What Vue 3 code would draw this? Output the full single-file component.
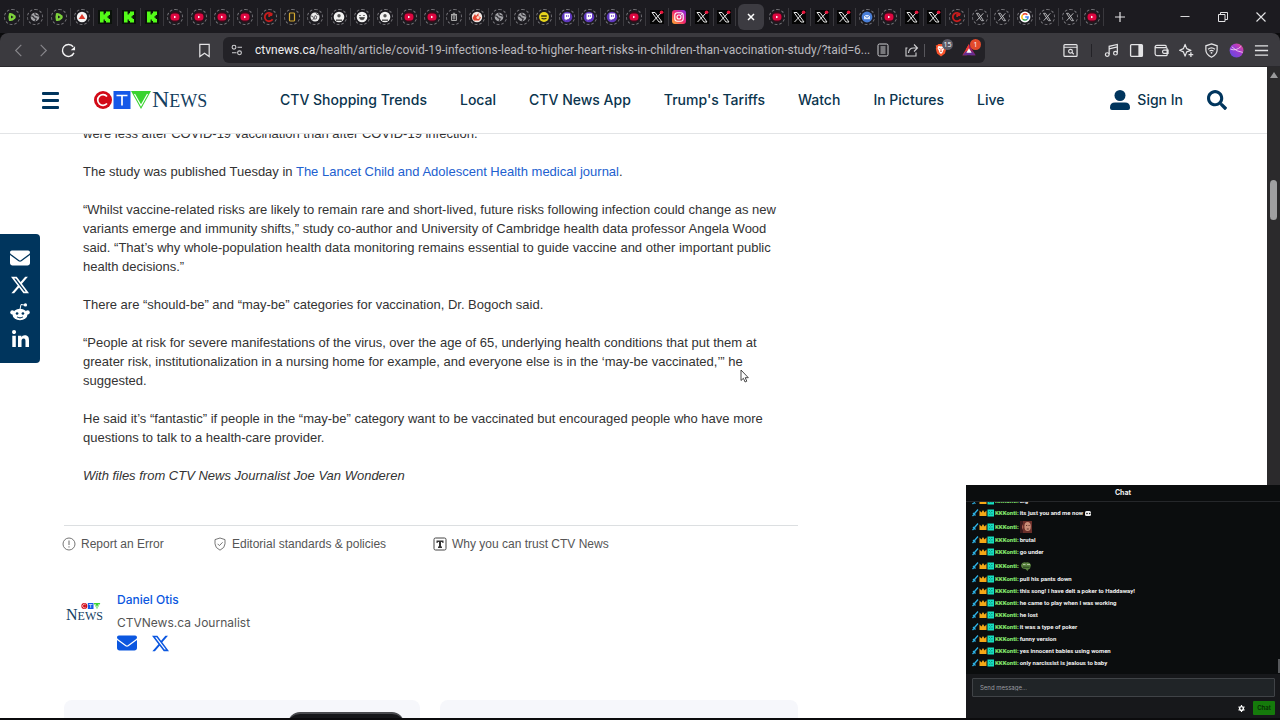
<script setup>
const tabsLeft = ['rumble', 'globe', 'rumble', 'peak', 'kick', 'kick', 'kick', 'play', 'play', 'play', 'play', 'redc', 'frame', 'ball', 'bust', 'face', 'bust', 'play']
const tabsMid = ['play', 'trash', 'hand', 'globe', 'globe', 'smile', 'twitch', 'twitch', 'twitch', 'play', 'xdark', 'insta', 'xdark', 'xdark']
const tabsRight = ['play', 'xdark', 'xdark', 'xdark', 'mailblue', 'play', 'xdark', 'xdark', 'redc', 'xring', 'xring', 'google', 'xring', 'xring', 'play']
const square = ['kick', 'xdark', 'insta']
const groups = [
  { name: 'first', tabs: tabsLeft },
  { name: 'middle', tabs: tabsMid },
  { name: 'active', tabs: [] },
  { name: 'last', tabs: tabsRight }
]

const navLinks = ['CTV Shopping Trends', 'Local', 'CTV News App', "Trump's Tariffs", 'Watch', 'In Pictures', 'Live']

const tools = [
  { id: 'music', label: 'Music' },
  { id: 'sidebar', label: 'Sidebar' },
  { id: 'wallet', label: 'Wallet' },
  { id: 'spark', label: 'Assistant' },
  { id: 'vpn', label: 'VPN' },
  { id: 'profile', label: 'Profile' },
  { id: 'menu', label: 'Menu' }
]

const shares = [
  { id: 'envelope', label: 'Email' },
  { id: 'x', label: 'X' },
  { id: 'reddit', label: 'Reddit' },
  { id: 'linkedin', label: 'LinkedIn' }
]

const messages = [
  { text: 'big' },
  { text: 'its just you and me now', eyes: true },
  { emote: 'emoteface' },
  { text: 'brutal' },
  { text: 'go under' },
  { emote: 'emotefrog' },
  { text: 'pull his pants down' },
  { text: 'this song! I have delt a poker to Haddaway!' },
  { text: 'he came to play when I was working' },
  { text: 'he lost' },
  { text: 'it was a type of poker' },
  { text: 'funny version' },
  { text: 'yes innocent babies using women' },
  { text: 'only narcissist is jealous to baby' }
]
</script>

<template>
  <div class="browser">
    <svg class="defs" aria-hidden="true">
      <defs>
        <linearGradient id="gInsta" x1="0" y1="1" x2="1" y2="0">
          <stop offset="0" stop-color="#ffb52e" /><stop offset=".5" stop-color="#f0246a" /><stop offset="1" stop-color="#7a2bf0" />
        </linearGradient>
        <linearGradient id="gProfile" x1="0" y1="1" x2="1" y2="0">
          <stop offset="0" stop-color="#5a4be0" /><stop offset=".55" stop-color="#a03bd0" /><stop offset="1" stop-color="#f04a8a" />
        </linearGradient>
        <symbol id="rumble" viewBox="0 0 14 14"><path d="M4 3.2Q7 2 10.200 5.400Q11.600 7 10.200 8.600Q7 12 4 10.800Q2.800 7 4 3.200Z" fill="#7ed33c" /><path d="M6 5.500v3l2.600-1.500z" fill="#1d1c21" /></symbol>
        <symbol id="globe" viewBox="0 0 14 14"><circle cx="7" cy="7" r="4.300" fill="#a4a4a8" /><path d="M3 6q2-.3 2.500 1t2 1.200-.5 2.600M7 3q-.5 2 1 2.300t2.800 1" fill="none" stroke="#29282d" stroke-width="1.100" /></symbol>
        <symbol id="peak" viewBox="0 0 14 14"><circle cx="7" cy="7" r="5.200" fill="#f4f4f4" /><path d="M7 4l3.300 5H3.700z" fill="#e03a2c" /></symbol>
        <symbol id="kick" viewBox="0 0 14 14"><rect width="14" height="14" fill="#0a120a" /><path d="M2 1.500h3.600v3h1.200V3.200H8V1.500h4V5h-1.300v1.200H9.500v1.600h1.200V9H12v3.500H8v-1.600H6.800V9.500H5.600v3H2z" fill="#53fc18" /></symbol>
        <symbol id="play" viewBox="0 0 14 14"><circle cx="7" cy="7" r="5.400" fill="#3a0c1a" /><rect x="2.600" y="3.400" width="8.800" height="7.200" rx="3" fill="#dd0740" /><path d="M6 5.700v2.600l2.400-1.300z" fill="#fff" /></symbol>
        <symbol id="redc" viewBox="0 0 14 14"><path d="M10.400 4.600A4.200 4.200 0 1 0 10.600 9.200M10.200 5H7.200v2" fill="none" stroke="#c61d1d" stroke-width="1.800" /></symbol>
        <symbol id="frame" viewBox="0 0 14 14"><rect x="4.500" y="3" width="5" height="8" rx=".8" fill="#24221c" stroke="#d3a831" stroke-width="1.200" /></symbol>
        <symbol id="ball" viewBox="0 0 14 14"><circle cx="7" cy="7" r="4.500" fill="#ececec" /><path d="M3 6l2 .5.500 2-1 2M7 5.500l1.800 1L8.200 9H6zM8 2.800l1 1.600 2 .4" fill="none" stroke="#333238" stroke-width=".7" /></symbol>
        <symbol id="bust" viewBox="0 0 14 14"><circle cx="7" cy="7" r="5.300" fill="#f2f2f2" /><circle cx="7" cy="5.800" r="1.700" fill="#555" /><path d="M4 9.600h6v1.100H4z" fill="#222" /></symbol>
        <symbol id="face" viewBox="0 0 14 14"><circle cx="7" cy="7" r="5.300" fill="#f2f2f2" /><path d="M4.500 7.500h5q-.3 2.300-2.500 2.300T4.500 7.500M4 5.500h2M8 5.500h2" fill="#444" stroke="#444" stroke-width=".7" /></symbol>
        <symbol id="trash" viewBox="0 0 14 14"><path d="M4 4.500h6M5.800 3.300h2.400M4.500 5.200h5v5.300h-5zM6.200 6v3.500M7.800 6v3.500" fill="none" stroke="#aaa" stroke-width="1" /></symbol>
        <symbol id="hand" viewBox="0 0 14 14"><circle cx="7" cy="7" r="5.200" fill="#f3e9e4" /><path d="M2.500 8L5 4l1 2 2.500-3v3l2.500 1.500-2 3H4z" fill="#e2432e" /><circle cx="8" cy="7.400" r="1.500" fill="#ffd9c7" /></symbol>
        <symbol id="smile" viewBox="0 0 14 14"><circle cx="7" cy="7" r="4.900" fill="#e7d51d" /><path d="M4.200 6h5.600M4.600 8.200q2.400 1.400 4.800 0" stroke="#2c2a10" stroke-width="1.300" fill="none" /></symbol>
        <symbol id="twitch" viewBox="0 0 14 14"><circle cx="7" cy="7" r="5.300" fill="#5f38bd" /><path d="M4.500 3.500h5.500v4L8.300 9.200H7L5.600 10.600V9.200H4.500z" fill="#fff" /><path d="M6.500 5v2M8.300 5v2" stroke="#6e3fd8" stroke-width=".8" /></symbol>
        <symbol id="xdark" viewBox="0 0 14 14"><rect width="14" height="14" fill="#050505" /><path d="M2 2.500h3l7 9.500H9zM11.500 2.500L2.500 12" fill="none" stroke="#e6e6e6" stroke-width="1" /><circle cx="11.600" cy="2.300" r="1.800" fill="#e8173d" /></symbol>
        <symbol id="xring" viewBox="0 0 14 14"><path d="M3.500 3.300h2l5 7.400h-2zM10.300 3.300L3.700 10.700" fill="none" stroke="#c2c2c5" stroke-width=".9" /></symbol>
        <symbol id="insta" viewBox="0 0 14 14"><rect width="14" height="14" rx="3" fill="url(#gInsta)" /><rect x="2.800" y="2.800" width="8.400" height="8.400" rx="2.500" fill="none" stroke="#fff" stroke-width="1.100" /><circle cx="7" cy="7" r="2" fill="none" stroke="#fff" stroke-width="1.100" /><circle cx="9.400" cy="4.600" r=".6" fill="#fff" /></symbol>
        <symbol id="mailblue" viewBox="0 0 14 14"><circle cx="7" cy="7" r="5.400" fill="#4a7fd8" /><path d="M4 5h6v4.200H4z" fill="#dfe9fb" /><path d="M4 5l3 2.500L10 5" fill="none" stroke="#4a7fd8" stroke-width="1" /></symbol>
        <symbol id="google" viewBox="0 0 14 14"><circle cx="7" cy="7" r="5.400" fill="#fff" /><g fill="none" stroke-width="1.500"><path d="M4.800 4.800A3.100 3.100 0 0 1 9.300 4.800" stroke="#ea4335" /><path d="M4.800 4.800A3.100 3.100 0 0 0 4.800 9.200" stroke="#fbbc05" /><path d="M4.800 9.200A3.100 3.100 0 0 0 9.200 9.200" stroke="#34a853" /><path d="M9.200 9.200A3.100 3.100 0 0 0 10.100 7.100H7.200" stroke="#4285f4" /></g></symbol>

        <symbol id="envelope" viewBox="0 0 512 512"><path fill="currentColor" d="M48 64C21.500 64 0 85.500 0 112c0 15.100 7.100 29.300 19.200 38.400L236.800 313.600c11.400 8.500 27 8.500 38.400 0L492.800 150.400c12.100-9.100 19.200-23.300 19.200-38.400c0-26.500-21.500-48-48-48H48zM0 176V384c0 35.300 28.700 64 64 64H448c35.300 0 64-28.700 64-64V176L294.400 339.200c-22.800 17.100-54 17.100-76.800 0L0 176z" /></symbol>
        <symbol id="x" viewBox="0 0 24 24"><path fill="currentColor" d="M18.901 1.153h3.680l-8.040 9.190L24 22.846h-7.406l-5.800-7.584-6.638 7.584H.474l8.600-9.830L0 1.154h7.594l5.243 6.932ZM17.610 20.644h2.039L6.486 3.240H4.298Z" /></symbol>
        <symbol id="reddit" viewBox="0 0 24 24"><ellipse cx="12" cy="15" rx="9" ry="7" fill="currentColor" /><circle cx="2.800" cy="12.500" r="2.500" fill="currentColor" /><circle cx="21.200" cy="12.500" r="2.500" fill="currentColor" /><circle cx="18.500" cy="3.500" r="2" fill="currentColor" /><path d="M12 9l1.200-6 5 .8" fill="none" stroke="currentColor" stroke-width="1.200" /><circle cx="8.500" cy="13.800" r="1.600" fill="#00355d" /><circle cx="15.500" cy="13.800" r="1.600" fill="#00355d" /><path d="M8.500 17.800q3.500 2.400 7 0" fill="none" stroke="#00355d" stroke-width="1.300" /></symbol>
        <symbol id="linkedin" viewBox="0 0 448 448"><path fill="currentColor" d="M100.280 448H7.400V148.900h92.880zM53.790 108.100C24.090 108.100 0 83.500 0 53.800a53.790 53.790 0 0 1 107.580 0c0 29.700-24.100 54.300-53.790 54.300zM447.900 448h-92.680V302.400c0-34.700-.7-79.200-48.290-79.200-48.290 0-55.690 37.700-55.690 76.700V448h-92.780V148.900h89.080v40.800h1.300c12.400-23.500 42.690-48.300 87.880-48.300 94 0 111.280 61.900 111.280 142.300V448z" /></symbol>

        <symbol id="music" viewBox="0 0 16 16"><g fill="none" stroke="#e4e4e6" stroke-width="1.300"><path d="M5.500 12V3.500L14.200 1.500V10.500M5.500 6.200l8.700-2" /><ellipse cx="3.500" cy="12.300" rx="2" ry="1.900" /><ellipse cx="12.200" cy="10.900" rx="2" ry="1.900" /></g></symbol>
        <symbol id="sidebar" viewBox="0 0 16 16"><rect x="1.700" y="1.700" width="12.600" height="12.600" rx="1" fill="none" stroke="#e4e4e6" stroke-width="1.400" /><path d="M10 2h4v12h-4z" fill="#e4e4e6" /></symbol>
        <symbol id="wallet" viewBox="0 0 16 16"><g fill="none" stroke="#e4e4e6" stroke-width="1.300"><path d="M13 5V3.500A1 1 0 0 0 12 2.500H3A2 2 0 0 0 1.200 4v7.500a2 2 0 0 0 2 2H13a1 1 0 0 0 1-1V6a1 1 0 0 0-1-1H3.200A1.500 1.500 0 0 1 1.400 3.800M15 7.500h-4.500a1.800 1.800 0 0 0 0 3.500H15z" /></g></symbol>
        <symbol id="spark" viewBox="0 0 16 16"><path d="M6.500 1.500L8.200 6l4.500 1.800-4.500 1.700-1.700 4.500-1.800-4.500L.7 7.800 4.700 6z" fill="none" stroke="#e4e4e6" stroke-width="1.300" stroke-linejoin="round" /><path d="M12.700 9.800v5M10.200 12.300h5" stroke="#e4e4e6" stroke-width="1.400" /></symbol>
        <symbol id="vpn" viewBox="0 0 16 16"><path d="M8 1l6 2v4.500q0 4.800-6 7.700Q2 12.300 2 7.500V3z" fill="none" stroke="#e4e4e6" stroke-width="1.300" /><path d="M4.300 6.700q3.700-3 7.400 0M5.800 8.700q2.200-1.700 4.400 0" fill="none" stroke="#e4e4e6" stroke-width="1.200" /><circle cx="8" cy="10.500" r="1" fill="#e4e4e6" /></symbol>
        <symbol id="profile" viewBox="0 0 16 16"><circle cx="8" cy="8" r="7.400" fill="url(#gProfile)" /><path d="M1.500 6.500q6 2.500 11.500-3M3 4q5 5.500 11.600 6" fill="none" stroke="#f3d6f2" stroke-width=".9" /></symbol>
        <symbol id="menu" viewBox="0 0 16 16"><path d="M1 3h14M1 8h14M1 13h14" stroke="#e4e4e6" stroke-width="1.400" /></symbol>

        <symbol id="emoteface" viewBox="0 0 12 12"><rect width="12" height="12" fill="#6b2f2a" /><ellipse cx="7.600" cy="5.500" rx="3.200" ry="4.500" fill="#c98d77" /><path d="M0 0h3v12H0z" fill="#3a1a1c" /><path d="M2 3l1.500 3L2 9" fill="#a5584a" /><path d="M6 4.500h1.200M8.500 4.500h1.200M6.800 8h2" stroke="#4b201b" stroke-width=".8" /></symbol>
        <symbol id="emotefrog" viewBox="0 0 12 12"><path d="M1 5Q2 1.500 6 2.500q4-1 5 2.500L10 8.500Q8 9 7.500 11L5.500 9Q1 9 1 5z" fill="#58813e" /><path d="M3 4.500h2.500M7 4.500h3" stroke="#b9c8a8" stroke-width=".9" /><path d="M3 7.200h6.500" stroke="#27401d" stroke-width="1" /></symbol>
      </defs>
    </svg>

    <header class="titlebar">
      <template v-for="g in groups" :key="g.name">
        <div v-if="g.tabs.length" class="tabs">
          <button v-for="(t, i) in g.tabs" :key="i" class="tab" :class="{ ring: !square.includes(t) }" aria-label="Tab">
            <svg><use :href="'#' + t" /></svg>
          </button>
        </div>
        <button v-else class="tab-active" aria-label="Close tab">
          <svg viewBox="0 0 8 8"><path d="M1 1l6 6M7 1L1 7" stroke="#fff" stroke-width="1.500" /></svg>
        </button>
      </template>
      <button class="newtab" aria-label="New tab">
        <svg viewBox="0 0 10 10"><path d="M5 0v10M0 5h10" stroke="#e4e4e6" stroke-width="1.200" /></svg>
      </button>
      <div class="window-buttons">
        <button aria-label="Minimise"><svg viewBox="0 0 10 10"><path d="M.5 4.500h9" stroke="#d8d8da" /></svg></button>
        <button aria-label="Restore"><svg viewBox="0 0 10 10"><path d="M.5 2.500h6.500v7H.5zM2.500 2.500v-2h7v7H7" fill="none" stroke="#e4e4e6" /></svg></button>
        <button aria-label="Close"><svg viewBox="0 0 10 10"><path d="M.5.5l9 9M9.500.5l-9 9" stroke="#e4e4e6" stroke-width="1.100" /></svg></button>
      </div>
    </header>

    <div class="toolbar">
      <div class="nav-buttons">
        <button aria-label="Back"><svg viewBox="0 0 16 16"><path d="M11 2L5 8l6 6" fill="none" stroke="#88878c" stroke-width="1.200" /></svg></button>
        <button aria-label="Forward"><svg viewBox="0 0 16 16"><path d="M5 2l6 6-6 6" fill="none" stroke="#88878c" stroke-width="1.200" /></svg></button>
        <button aria-label="Reload"><svg viewBox="0 0 16 16"><path d="M13.800 10.500A6.400 6.400 0 1 1 13 4" fill="none" stroke="#f4f4f5" stroke-width="1.500" /><path d="M15 3.500v4.300h-4.600z" fill="#f4f4f5" /></svg></button>
        <button class="bookmark" aria-label="Bookmark"><svg viewBox="0 0 16 16"><path d="M3 1.500h10v13L8 11l-5 3.500z" fill="none" stroke="#e4e4e6" stroke-width="1.300" /></svg></button>
      </div>
      <div class="address">
        <svg class="site" viewBox="0 0 12 12"><g fill="none" stroke="#cfcfd2" stroke-width="1.100"><circle cx="3" cy="3.200" r="1.900" /><path d="M6.500 3.200H11M1 8.800h4.500" /><circle cx="8.500" cy="8.800" r="1.900" /></g></svg>
        <div class="url"><span>ctvnews.ca</span>/health/article/covid-19-infections-lead-to-higher-heart-risks-in-children-than-vaccination-study/?taid=6...</div>
        <button aria-label="Reader view"><svg viewBox="0 0 14 14"><rect x="2" y="1" width="10" height="12" rx="1.500" fill="none" stroke="#cfcfd2" /><path d="M4.500 4h5M4.500 6h5M4.500 8h5M4.500 10h5" stroke="#cfcfd2" /></svg></button>
        <button class="share-btn" aria-label="Share"><svg viewBox="0 0 14 14"><path d="M2.500 5H1v8h10V9.500M3.500 10q.5-5 5-5H12M9 1.500L12.500 5 9 8.500" fill="none" stroke="#cfcfd2" stroke-width="1.100" /></svg></button>
        <i class="divider"></i>
        <button class="ext" aria-label="Shields"><svg viewBox="0 0 14 16"><path d="M4 1h6l1.500 1.500H13L12.500 5 13 6.500 11.500 12 7 15.500 2.500 12 1 6.500 1.500 5 1 2.500h1.500z" fill="#fb542b" /><path d="M7 4l3-.5L11 6 9.500 8.500 9 10.500 7 12.500 5 10.500 4.500 8.500 3 6l1-2.500z" fill="#fff" /><path d="M4.500 6l2 .8M9.500 6l-2 .8M7 7v2M5.700 9.800L7 9l1.300.8" stroke="#fb542b" stroke-width=".8" /></svg><b>15</b></button>
        <button class="ext rewards" aria-label="Rewards"><svg viewBox="0 0 16 16"><path d="M8 1L4.500 7 8 8.500z" fill="#ff4724" /><path d="M8 1L.5 14h5L8 8z" fill="#ee3a35" /><path d="M8 1l7.500 13H10L8 8z" fill="#9e1f63" /><path d="M.5 14h15L11.500 9.500h-7z" fill="#662d91" /><path d="M8 6l3 5H5z" fill="#fff" /></svg><b>1</b></button>
      </div>
      <div class="tools">
        <button aria-label="Search page"><svg viewBox="0 0 16 16"><rect x="1" y="1.700" width="14" height="12.600" rx="1" fill="none" stroke="#e4e4e6" stroke-width="1.300" /><path d="M1 4.500h14M9.500 10l2 2" stroke="#e4e4e6" stroke-width="1.200" /><circle cx="8" cy="8.800" r="2" fill="none" stroke="#e4e4e6" stroke-width="1.200" /></svg></button>
        <i class="divider"></i>
        <button v-for="t in tools" :key="t.id" :aria-label="t.label"><svg><use :href="'#' + t.id" /></svg></button>
      </div>
    </div>

    <div class="viewport">
      <div class="page">
        <header class="site-header">
          <button class="burger" aria-label="Open menu"><i></i><i></i><i></i></button>
          <a class="logo" href="#" aria-label="CTV News">
            <svg viewBox="0 0 58 18"><circle cx="9" cy="9" r="9" fill="#d20a17" /><rect x="19.500" width="17" height="18" fill="#1559e8" /><path d="M37 0h20L47 18z" fill="#3ad32f" />
              <g fill="none" stroke="#fff" stroke-width="1.700"><path d="M13 5.500A5.300 5.300 0 1 0 13 12.500M22.500 4.500h11M28 4.500v10" /><path d="M40.500 3L47 14.500 53.500 3" stroke-width="1.200" /></g></svg>
            <span>N<small>EWS</small></span>
          </a>
          <nav>
            <a v-for="l in navLinks" :key="l" href="#">{{ l }}</a>
          </nav>
          <a class="signin" href="#">
            <svg viewBox="0 0 20 20"><circle cx="10" cy="5.500" r="5.500" fill="#00355d" /><path d="M0 20v-2.500Q0 12.500 5 12.500h10q5 0 5 5V18q0 2-2 2H2q-2 0-2-2z" fill="#00355d" /></svg>
            Sign In
          </a>
          <button class="search" aria-label="Search">
            <svg viewBox="0 0 512 512"><path fill="#00355d" d="M505 442.700L405.300 343c-4.500-4.500-10.600-7-17-7H372c27.600-35.300 44-79.700 44-128C416 93.100 322.900 0 208 0S0 93.100 0 208s93.100 208 208 208c48.300 0 92.700-16.400 128-44v16.300c0 6.400 2.500 12.500 7 17l99.700 99.700c9.400 9.400 24.600 9.400 33.900 0l28.300-28.300c9.400-9.400 9.400-24.600.1-34zM208 336c-70.700 0-128-57.200-128-128 0-70.700 57.200-128 128-128 70.700 0 128 57.200 128 128 0 70.700-57.200 128-128 128z" /></svg>
          </button>
        </header>

        <aside class="share-bar">
          <a v-for="s in shares" :key="s.id" href="#" :aria-label="s.label"><svg :class="s.id"><use :href="'#' + s.id" /></svg></a>
        </aside>

        <main>
          <article>
            <p>were less after COVID-19 vaccination than after COVID-19 infection.</p>
            <p>The study was published Tuesday in <a href="#">The Lancet Child and Adolescent Health medical journal</a>.</p>
            <p>“Whilst vaccine-related risks are likely to remain rare and short-lived, future risks following infection could change as new variants emerge and immunity shifts,” study co-author and University of Cambridge health data professor Angela Wood said. “That’s why whole-population health data monitoring remains essential to guide vaccine and other important public health decisions.”</p>
            <p>There are “should-be” and “may-be” categories for vaccination, Dr. Bogoch said.</p>
            <p>“People at risk for severe manifestations of the virus, over the age of 65, underlying health conditions that put them at greater risk, institutionalization in a nursing home for example, and everyone else is in the ‘may-be vaccinated,’” he suggested.</p>
            <p>He said it’s “fantastic” if people in the “may-be” category want to be vaccinated but encouraged people who have more questions to talk to a health-care provider.</p>
            <p><em>With files from CTV News Journalist Joe Van Wonderen</em></p>
          </article>

          <div class="notes">
            <a href="#"><svg viewBox="0 0 14 14"><circle cx="7" cy="7" r="6" fill="none" stroke="#666" stroke-width=".9" /><path d="M7 3.500v4.500M7 9.300v1.200" stroke="#666" /></svg>Report an Error</a>
            <a href="#"><svg viewBox="0 0 14 14"><path d="M7 1l5 1.600v4.200q0 4-5 6.400Q2 10.800 2 6.800V2.600z" fill="none" stroke="#666" stroke-width=".9" /><path d="M4.600 6.800l1.800 1.800 3.200-3.300" fill="none" stroke="#666" stroke-width=".9" /></svg>Editorial standards &amp; policies</a>
            <a href="#"><svg viewBox="0 0 14 14"><rect x="1" y="1" width="12" height="12" rx="1.500" fill="none" stroke="#444" /><path d="M3.500 3.500h7V6H9.300v-.9H8v4.400h1V11H5V9.500h1V5.100H4.700V6H3.500z" fill="#333" /></svg>Why you can trust CTV News</a>
          </div>

          <section class="author">
            <div class="mini-logo">
              <svg viewBox="0 0 58 18"><circle cx="9" cy="9" r="9" fill="#d20a17" /><rect x="19.500" width="17" height="18" fill="#1559e8" /><path d="M37 0h20L47 18z" fill="#3ad32f" /><g fill="none" stroke="#fff" stroke-width="2"><path d="M13 5.500A5.300 5.300 0 1 0 13 12.500M22.500 4.500h11M28 4.500v10M41 3l6 11 6-11" /></g></svg>
              <span>N<small>EWS</small></span>
            </div>
            <div class="bio">
              <a class="name" href="#">Daniel Otis</a>
              <div class="role">CTVNews.ca Journalist</div>
              <div class="contacts">
                <a href="#" aria-label="Email the author"><svg class="mail"><use href="#envelope" /></svg></a>
                <a href="#" aria-label="Author on X"><svg class="ex"><use href="#x" /></svg></a>
              </div>
            </div>
          </section>

          <div class="cards">
            <div class="card"><i class="phone"></i></div>
            <div class="card"></div>
          </div>
        </main>
      </div>
      <div class="scrollbar"><i class="arrow"></i><i class="thumb"></i></div>
    </div>

    <svg class="cursor" viewBox="0 0 9 14" aria-hidden="true"><path d="M1 1v10.500l2.400-2.200 1.700 3.700 1.700-.8-1.600-3.500H8.300z" fill="#fff" stroke="#333" stroke-width=".9" /></svg>

    <section class="chat">
      <h2>Chat</h2>
      <ul>
        <li v-for="(m, i) in messages" :key="i" :class="{ tall: m.emote }">
          <svg class="badges" viewBox="0 0 22 8" aria-hidden="true">
            <path d="M6 .5L2.500 4.500M.5 7L3 4.500M1 4l2.500 2.500" stroke="#2eb3e6" stroke-width="1.300" />
            <path d="M7.500 1.500l2 2 1.500-2.500 1.500 2.500 2-2V7h-7z" fill="#f5a816" />
            <rect x="15.500" y=".5" width="6.500" height="7" fill="#16dfc0" /><path d="M17 2l1.500 1.500M20.500 2.500h-1.500M17 5.500l1.500-.5M20 4.500v1.500" stroke="#075a56" stroke-width=".6" />
          </svg>
          <b>KKKonti:</b>
          <svg v-if="m.emote" class="emote"><use :href="'#' + m.emote" /></svg>
          <span v-else>{{ m.text }}</span>
          <svg v-if="m.eyes" class="eyes" viewBox="0 0 6 5"><rect width="6" height="5" rx="1.500" fill="#eee" /><circle cx="2" cy="2.500" r=".8" fill="#111" /><circle cx="4.700" cy="2.500" r=".8" fill="#111" /></svg>
        </li>
      </ul>
      <form @submit.prevent>
        <input type="text" placeholder="Send message..." aria-label="Send message" />
        <div class="send">
          <button type="button" class="gear" aria-label="Chat settings"><svg viewBox="0 0 8 8"><circle cx="4" cy="4" r="2.100" fill="none" stroke="#fff" stroke-width="1.600" /><path d="M4 0v1.500M4 6.500V8M.6 2l1.300.8M6.100 5.200l1.300.8M.6 6l1.300-.8M6.100 2.800L7.400 2" stroke="#fff" stroke-width="1.400" /></svg></button>
          <button class="submit">Chat</button>
        </div>
      </form>
      <i class="chat-thumb"></i>
    </section>
  </div>
</template>

<style>
body { margin: 0; background: #000; }
</style>

<style scoped>
* { box-sizing: border-box; }
button { border: 0; padding: 0; background: none; font: inherit; color: inherit; display: flex; align-items: center; justify-content: center; }
a { text-decoration: none; color: inherit; }
svg, i { display: block; flex: none; }
.browser { position: relative; height: 100vh; display: flex; flex-direction: column; overflow: hidden; background: #0b0b0d; padding-bottom: 2px; font-family: "Liberation Sans", Arial, sans-serif; }
.defs { position: absolute; width: 0; height: 0; }

.titlebar { height: 33px; background: #1c1b20; display: grid; grid-template-columns: 420px 315px 30px 338px 32px 1fr; padding-left: 1px; align-items: center; }
.tabs { display: flex; }
.tab { flex: 1; height: 18px; position: relative; border-right: 1px solid #39383d; }
.tab svg { width: 14px; height: 14px; }
.ring::after { content: ""; position: absolute; left: 50%; top: 50%; width: 14px; height: 14px; transform: translate(-50%, -50%); border: 1px dashed #77767b; border-radius: 50%; }
.tab-active { width: 26px; height: 26px; margin-left: 2px; border-radius: 6px; background: #3c3b41; }
.tab-active svg { width: 8px; height: 8px; }
.newtab svg { width: 10px; height: 10px; }
.window-buttons { display: flex; justify-content: flex-end; }
.window-buttons button { width: 38px; height: 32px; }
.window-buttons svg { width: 10px; height: 10px; }

.toolbar { height: 34px; background: #3b3a3f; border-radius: 8px 8px 0 0; border-bottom: 1px solid #2a292d; display: grid; grid-template-columns: 223px minmax(0, 1fr) 295px; align-items: center; padding-top: 1px; }
.toolbar button { width: 25px; height: 26px; }
.toolbar button svg { width: 15px; height: 15px; }
.nav-buttons { display: flex; padding: 0 6px; }
.nav-buttons .bookmark { margin-left: auto; }
.address { display: flex; align-items: center; height: 26px; background: #232227; border-radius: 6px; padding: 0 4px 0 8px; }
.site { width: 12px; height: 12px; margin-right: 12px; }
.url { flex: 1; min-width: 0; overflow: hidden; white-space: nowrap; font: 12px/18px Roboto, "Open Sans", sans-serif; color: #b9b8bd; }
.url span { color: #f0f0f1; }
.address button svg { width: 14px; height: 14px; }
.divider { width: 1px; height: 13px; background: #58575c; }
.address .share-btn { margin-left: 4px; }
.toolbar .ext { position: relative; margin-left: 3px; }
.ext b { position: absolute; right: 0; top: 2px; min-width: 11px; height: 11px; border-radius: 6px; background: #5b5a66; color: #fff; font: 7px/11px "Open Sans", sans-serif; text-align: center; }
.rewards b { background: #e24a2c; }
.tools { display: flex; align-items: center; justify-content: flex-end; padding-right: 6px; }
.tools .divider { margin: 0 7px 0 8px; background: #232227; }

.viewport { flex: 1; min-height: 0; display: flex; }
.page { flex: 1; min-width: 0; position: relative; background: #fff; display: flex; flex-direction: column; overflow: hidden; }
.site-header { flex: none; height: 67px; border-bottom: 1px solid #e2e4e6; display: flex; align-items: center; padding: 0 40px 0 42px; color: #0a344d; font: 500 14px/20px Inter, sans-serif; background: #fff; }
.burger { flex-direction: column; gap: 4px; width: 17px; }
.burger i { width: 17px; height: 3px; border-radius: 1px; background: #00355d; }
.logo { display: flex; align-items: center; margin-left: 35px; width: 116px; }
.logo svg { width: 58px; height: 18px; }
.logo span { font: 24px/24px "Liberation Serif", serif; color: #14405f; }
.logo small { font-size: 18px; }
nav { display: flex; gap: 33px; margin-left: 70px; white-space: nowrap; }
.signin { margin-left: auto; display: flex; align-items: center; gap: 7px; }
.signin svg { width: 20px; height: 20px; }
.search { margin-left: 24px; }
.search svg { width: 20px; height: 20px; }

.share-bar { position: absolute; left: 0; top: 167px; width: 40px; background: #00355d; border-radius: 0 4px 4px 0; color: #fff; padding: 10px 0 11px; }
.share-bar a { height: 27px; display: flex; align-items: center; justify-content: center; }
.share-bar svg { width: 20px; height: 20px; }
.share-bar svg.x { width: 18px; height: 18px; }
.share-bar svg.linkedin { width: 17px; height: 17px; }

main { flex: 1; min-height: 0; overflow: hidden; width: 736px; margin-left: 62px; padding-left: 2px; display: flow-root; }
article { margin-top: -10px; padding: 0 8px 40px 19px; color: #333; font-size: 13px; line-height: 19px; border-bottom: 1px solid #dcdfe1; }
article p { margin: 0 0 19px; }
article p:last-child { margin: 0; }
article a { color: #2160cf; }

.notes { display: grid; grid-template-columns: 151px 220px 1fr; margin-left: -2px; padding-top: 9px; font-size: 12px; line-height: 18px; color: #555; }
.notes a { display: flex; align-items: center; gap: 5px; }
.notes svg { width: 14px; height: 14px; }

.author { display: flex; margin-top: 38px; }
.mini-logo { width: 53px; padding: 12px 0 0 2px; }
.mini-logo svg { width: 20px; height: 6px; margin-left: 15px; }
.mini-logo span { display: block; font: 16px/12px "Liberation Serif", serif; color: #14405f; }
.mini-logo small { font-size: 12px; }
.bio { font-family: Inter, sans-serif; font-size: 12px; line-height: 18px; }
.name { color: #0b57e0; font-weight: 500; }
.role { color: #555; margin-top: 5px; }
.contacts { display: flex; align-items: center; gap: 15px; color: #0b57e0; height: 22px; }
.mail { width: 20px; height: 20px; }
.ex { width: 17px; height: 17px; }
.cards { display: grid; grid-template-columns: 356fr 358fr; gap: 20px; margin-top: 46px; }
.card { height: 120px; border-radius: 8px; background: #f6f7fb; display: flex; justify-content: flex-end; }
.phone { width: 116px; margin: 12px 16px 0 0; border-radius: 12px 12px 0 0; background: #16171a; border-top: 2px solid #4a4b4f; }

.scrollbar { width: 13px; background: #2b2a2c; display: flex; flex-direction: column; align-items: center; }
.arrow { margin-top: 5px; border: 4px solid transparent; border-top: 0; border-bottom: 6px solid #9a9a9c; }
.thumb { margin-top: 102px; width: 7px; height: 40px; border-radius: 4px; background: #9f9fa1; }

.cursor { position: absolute; left: 740px; top: 369px; width: 9px; height: 14px; }

.chat { position: absolute; right: 0; bottom: 2px; width: 314px; height: 233px; background: #0b0d0e; color: #f2f2f2; font-family: Inter, sans-serif; display: flex; flex-direction: column; }
.chat h2 { margin: 0; height: 17px; font: 700 7px/16px Inter, sans-serif; text-align: center; border-bottom: 1px solid #25272a; flex: none; }
.chat ul { list-style: none; margin: 0; padding: 0 6px 5px; flex: 1; min-height: 0; overflow: hidden; display: flex; flex-direction: column; justify-content: flex-end; }
.chat li { flex: none; height: 12px; display: flex; align-items: center; font: 700 6px/12px Roboto, sans-serif; white-space: nowrap; }
.chat li.tall { height: 15px; }
.badges { width: 22px; height: 8px; margin-right: 1px; }
.chat li b { color: #7fe06a; margin-right: 1px; }
.emote { width: 12px; height: 12px; }
.eyes { width: 6px; height: 5px; margin-left: 2px; }
.chat form { flex: none; background: #17181b; padding: 4px 5px 3px 6px; }
.chat input { display: block; width: 100%; height: 19px; border: 1px solid #404347; border-radius: 1px; background: #202427; padding: 0 7px; color: #eee; font: 6px/10px Inter, sans-serif; }
.chat input::placeholder { color: #9b9da0; opacity: 1; }
.send { display: flex; justify-content: flex-end; gap: 8px; margin-top: 4px; }
.gear svg { width: 7px; height: 7px; }
.submit { width: 22px; height: 14px; border-radius: 1px; background: #157a0b; color: #062c04; font: 600 6px/14px Inter, sans-serif; }
.chat-thumb { position: absolute; right: 0; bottom: 45px; width: 2px; height: 14px; background: #56585b; }
</style>
